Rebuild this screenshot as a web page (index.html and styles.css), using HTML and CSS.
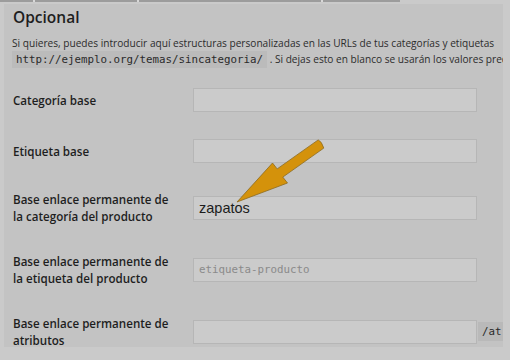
FILE: index.html
```html
<!DOCTYPE html>
<html lang="es">
<head>
    <meta charset="UTF-8">
    <title>Enlaces permanentes</title>
    <link rel="stylesheet" href="styles.css">
</head>
<body>
    <div class="top-strip">
        <span class="tick t1"></span>
        <span class="tick t2"></span>
        <span class="tick t3"></span>
    </div>
    <div class="panel">
        <h2 class="section-title">Opcional</h2>
        <p class="intro">Si quieres, puedes introducir aquí estructuras personalizadas en las URLs de tus categorías y etiquetas</p>
        <p class="intro"><code>http://ejemplo.org/temas/sincategoria/</code> . Si dejas esto en blanco se usarán los valores predeterminados.</p>

        <div class="form-table">
            <div class="form-row">
                <div class="label">Categoría base</div>
                <div class="field"><div class="input"></div></div>
            </div>
            <div class="form-row">
                <div class="label">Etiqueta base</div>
                <div class="field"><div class="input"></div></div>
            </div>
            <div class="form-row">
                <div class="label">Base enlace permanente de<br>la categoría del producto</div>
                <div class="field"><div class="input"><span class="value">zapatos</span></div></div>
            </div>
            <div class="form-row">
                <div class="label">Base enlace permanente de<br>la etiqueta del producto</div>
                <div class="field"><div class="input"><span class="placeholder">etiqueta-producto</span></div></div>
            </div>
            <div class="form-row">
                <div class="label">Base enlace permanente de<br>atributos</div>
                <div class="field">
                    <div class="input"></div>
                    <code class="suffix">/at</code>
                </div>
            </div>
        </div>

        <!-- annotation arrow pointing at the edited field -->
        <svg class="arrow" width="510" height="360" viewBox="0 0 510 360">
            <path d="M237 202 L272.5 163 L277.2 168.9 L318.2 139.9 Q321.5 141 323.8 148.1 L282.8 177.1 L287.5 183 Z"
                  fill="#d4920b" stroke="#8d6b1f" stroke-width="0.8" stroke-linejoin="round"/>
        </svg>
    </div>
</body>
</html>
```

FILE: styles.css
```css
* {
    margin: 0;
    padding: 0;
    box-sizing: border-box;
}

body {
    font-family: "Open Sans", "DejaVu Sans", sans-serif;
    background-color: #cacaca;
    color: #262626;
    width: 510px;
    height: 360px;
    overflow: hidden;
}


.top-strip {
    position: relative;
    width: 400px;
    height: 2px;
    background-color: #9c9c9c;
}


.tick {
    position: absolute;
    top: 0;
    width: 2px;
    height: 2px;
    background-color: #d8d8d8;
}

.t1 { left: 33px; }
.t2 { left: 137px; }
.t3 { left: 321px; }


.panel {
    position: relative;
    margin: 2px 0 0 4px;
    width: 499px;
    height: 343px;
    background-color: #c3c3c3;
    overflow: hidden;
    padding: 2px 0 0 8px;
}


.section-title {
    font-size: 15.5px;
    font-weight: 600;
    line-height: 22px;
    color: #1e1e1e;
    margin-left: 1px;
}


.intro {
    font-size: 10.15px;
    line-height: 16px;
    white-space: nowrap;
    color: #2c2c2c;
}

.intro:first-of-type {
    margin-top: 7px;
}


.intro code {
    font-family: "DejaVu Sans Mono", monospace;
    font-size: 10.8px;
    background-color: #bbbbbb;
    padding: 2px 4px;
    color: #2a2a2a;
}


.form-table {
    display: flex;
    flex-direction: column;
    margin-top: 7px;
}


.form-row {
    display: flex;
    align-items: center;
}


.label {
    flex: none;
    width: 180px;
    padding: 14px 0;
    font-size: 11.6px;
    font-weight: 600;
    line-height: 17px;
    color: #1e1e1e;
    margin-left: 1px;
    white-space: nowrap;
}


.field {
    display: flex;
    align-items: center;
    gap: 1px;
    padding: 13px 0 14px;
}


.input {
    width: 284px;
    height: 24px;
    flex: none;
    background-color: #cbcbcb;
    border: 1px solid #b6b6b6;
    display: flex;
    align-items: center;
    padding-left: 5px;
}


.value {
    font-family: "Liberation Sans", Arial, sans-serif;
    font-size: 14.5px;
    color: #1c1c1c;
    margin-top: 1px;
}


.placeholder {
    font-family: "DejaVu Sans Mono", monospace;
    font-size: 10.8px;
    color: #8a8a8a;
}


.suffix {
    flex: none;
    font-family: "DejaVu Sans Mono", monospace;
    font-size: 10.8px;
    background-color: #b9b9b9;
    color: #2a2a2a;
    padding: 3px 4px;
}


.arrow {
    position: absolute;
    left: -4px;
    top: -4px;
    pointer-events: none;
}
```
